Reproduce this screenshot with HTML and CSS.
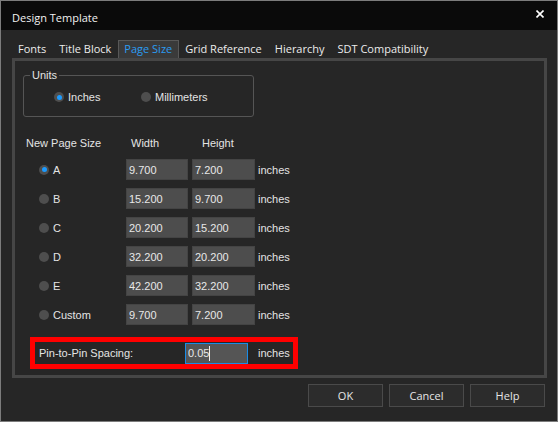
FILE: index.html
```html
<!DOCTYPE html>
<html lang="en">
<head>
    <meta charset="UTF-8">
    <title>Design Template</title>
    <link rel="stylesheet" href="styles.css">
</head>
<body>
    <div class="dialog">
        <div class="titlebar">
            <span class="title">Design Template</span>
            <span class="close">
                <svg width="8" height="8" viewBox="0 0 8 8"><path d="M0.5 0.5L7.5 7.5M7.5 0.5L0.5 7.5" stroke="#fff" stroke-width="1.6"/></svg>
            </span>
        </div>

        <div class="tabs">
            <span class="tab">Fonts</span>
            <span class="tab">Title Block</span>
            <span class="tab active">Page Size</span>
            <span class="tab">Grid Reference</span>
            <span class="tab">Hierarchy</span>
            <span class="tab">SDT Compatibility</span>
        </div>

        <div class="pane">
            <fieldset class="units">
                <legend>Units</legend>
                <div class="units-row">
                    <label class="radio checked"><span class="dot"></span>Inches</label>
                    <label class="radio"><span class="dot"></span>Millimeters</label>
                </div>
            </fieldset>

            <div class="size-head">
                <span class="col-name">New Page Size</span>
                <span class="col-w">Width</span>
                <span class="col-h">Height</span>
            </div>

            <div class="size-row">
                <label class="radio checked col-name"><span class="dot"></span>A</label>
                <input class="field" type="text" value="9.700">
                <input class="field" type="text" value="7.200">
                <span class="unit">inches</span>
            </div>
            <div class="size-row">
                <label class="radio col-name"><span class="dot"></span>B</label>
                <input class="field" type="text" value="15.200">
                <input class="field" type="text" value="9.700">
                <span class="unit">inches</span>
            </div>
            <div class="size-row">
                <label class="radio col-name"><span class="dot"></span>C</label>
                <input class="field" type="text" value="20.200">
                <input class="field" type="text" value="15.200">
                <span class="unit">inches</span>
            </div>
            <div class="size-row">
                <label class="radio col-name"><span class="dot"></span>D</label>
                <input class="field" type="text" value="32.200">
                <input class="field" type="text" value="20.200">
                <span class="unit">inches</span>
            </div>
            <div class="size-row">
                <label class="radio col-name"><span class="dot"></span>E</label>
                <input class="field" type="text" value="42.200">
                <input class="field" type="text" value="32.200">
                <span class="unit">inches</span>
            </div>
            <div class="size-row">
                <label class="radio col-name"><span class="dot"></span>Custom</label>
                <input class="field" type="text" value="9.700">
                <input class="field" type="text" value="7.200">
                <span class="unit">inches</span>
            </div>

            <div class="pin-box">
                <span class="pin-label">Pin-to-Pin Spacing:</span>
                <span class="pin-wrap">
                    <input class="field focused" type="text" value="0.05">
                    <span class="caret"></span>
                </span>
                <span class="unit">inches</span>
            </div>
        </div>

        <div class="actions">
            <button class="btn">OK</button>
            <button class="btn">Cancel</button>
            <button class="btn">Help</button>
        </div>
    </div>
</body>
</html>
```

FILE: styles.css
```css
body {
    margin: 0;
    background: #262626;
}
.dialog {
    width: 558px;
    height: 422px;
    box-sizing: border-box;
    border: 1px solid #7c7c7c;
    background: #262626;
    font-family: 'Open Sans', sans-serif;
    font-size: 11px;
    color: #ececec;
}
.titlebar {
    height: 29px;
    background: #0a0a0a;
    display: flex;
    align-items: center;
    padding: 3px 13px 0 11px;
    box-sizing: border-box;
}
.title {
    flex: 1;
    color: #f2f2f2;
}
.close {
    display: flex;
    margin-top: -7px;
}

/* tabs */
.tabs {
    display: flex;
    margin-top: 10px;
    padding-left: 11px;
    height: 18px;
}
.tab {
    padding: 0 7px 0 6px;
    line-height: 17px;
    color: #ececec;
}
.tab.active {
    background: #3a3a3a;
    border: 1px solid #585858;
    border-bottom: none;
    color: #2a9cf2;
    padding: 0 6px 0 5px;
    line-height: 16px;
}

.pane {
    margin: 0 10px 0 11px;
    height: 320px;
    box-sizing: border-box;
    border: 3px solid #464646;
    font-family: 'Liberation Sans', Arial, sans-serif;
    font-size: 11px;
    color: #e4e4e4;
}

/* units group */
.units {
    margin: 7px 0 0 8px;
    width: 231px;
    box-sizing: border-box;
    border: 1px solid #555;
    border-radius: 3px;
    padding: 0 0 11px 6px;
}
.units legend {
    padding: 0 2px;
    line-height: 14px;
    font-size: 11px;
}
.units-row {
    display: flex;
    margin: 7px 0 0 24px;
    height: 16px;
}
.units-row .radio {
    width: 87px;
}

.radio {
    display: flex;
    align-items: center;
}
.dot {
    width: 10px;
    height: 10px;
    border-radius: 50%;
    background: #4e4e4e;
    margin-right: 4px;
    display: flex;
    align-items: center;
    justify-content: center;
}
.checked .dot::after {
    content: '';
    width: 5px;
    height: 5px;
    border-radius: 50%;
    background: #1c9bff;
}

/* page sizes */
.size-head {
    display: flex;
    margin-top: 16px;
    height: 20px;
    align-items: center;
}
.size-head .col-name {
    width: 100px;
    padding-left: 11px;
}
.size-head .col-w {
    width: 66px;
    padding-left: 5px;
}
.size-head .col-h {
    padding-left: 5px;
}
.size-row {
    display: flex;
    align-items: center;
    height: 29px;
}
.size-head + .size-row {
    margin-top: 2px;
}
.size-row .col-name {
    width: 111px;
    box-sizing: border-box;
    padding-left: 24px;
}
.field {
    width: 62px;
    height: 21px;
    box-sizing: border-box;
    margin: 0 4px 0 0;
    padding: 0 0 0 2px;
    border: 1px solid #444;
    background: #4d4d4d;
    color: #e8e8e8;
    font-family: 'Liberation Sans', Arial, sans-serif;
    font-size: 11px;
    outline: none;
}
.field + .field {
    width: 63px;
    margin-right: 3px;
}

/* pin spacing */
.pin-box {
    display: flex;
    align-items: center;
    margin: 8px 0 0 15px;
    width: 268px;
    height: 32px;
    box-sizing: border-box;
    border: 5px solid #ff0000;
    padding-left: 4px;
}
.pin-label {
    width: 146px;
}
.pin-wrap {
    position: relative;
    display: flex;
}
.field.focused {
    width: 63px;
    margin-right: 10px;
    border-color: #1a8ce6;
    background: #555;
}
.caret {
    position: absolute;
    left: 24px;
    top: 3px;
    width: 1px;
    height: 15px;
    background: #f0f0f0;
}

/* buttons */
.actions {
    display: flex;
    justify-content: flex-end;
    gap: 6px;
    margin-top: 6px;
    padding-right: 12px;
}
.btn {
    width: 75px;
    height: 23px;
    background: #2c2c2c;
    border: 1px solid #4a4a4a;
    color: #e6e6e6;
    font-family: 'Open Sans', sans-serif;
    font-size: 11px;
    padding: 0;
}
```
